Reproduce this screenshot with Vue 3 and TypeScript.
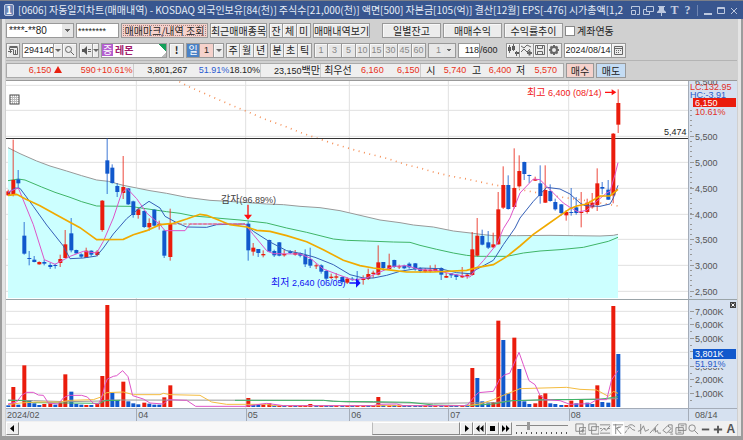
<script setup lang="ts">
import { ref } from 'vue'

type Candle = [string, number, number, number, number]

const account = ref('****-**80')
const code = ref('294140')
const pin = ref('********')
const count = ref('118')
const date = ref('2024/08/14')
const linked = ref(false)
const position = ref(22)

const titleParts = [
  '[0606]', '자동일지차트(매매내역)', '-', 'KOSDAQ', '외국인보유[84(천)]', '주식수[21,000(천)]',
  '액면[500]', '자본금[105(억)]', '결산[12월]', 'EPS[-476]', '시가총액[1,2',
]
const minutes = ['1', '3', '5', '10', '15', '30', '45', '60']

/* Both panes use units of a third of a pixel. */
const STEP = 15.64
const cx = (i: number) => Math.round((24 + STEP * i) / 3) * 3

/* colour, body top, body bottom, high, low */
const early: Candle[] = [
  ['r', 340, 352, 335, 354], ['r', 306, 351, 185, 355], ['b', 304, 316, 276, 330], ['b', 473, 527, 432, 530],
  ['b', 540, 543, 519, 562], ['b', 545, 552, 534, 553], ['r', 552, 559, 550, 560], ['b', 552, 557, 545, 562],
  ['b', 561, 567, 555, 573], ['b', 561, 564, 557, 572], ['r', 543, 555, 530, 567], ['r', 499, 540, 456, 540],
  ['b', 466, 517, 420, 523], ['b', 516, 526, 515, 528], ['b', 529, 536, 526, 540], ['r', 518, 540, 509, 540],
  ['b', 518, 530, 517, 535], ['r', 521, 531, 516, 535], ['r', 368, 456, 366, 461], ['b', 247, 287, 181, 348],
  ['b', 269, 315, 259, 317], ['b', 324, 342, 315, 357], ['r', 327, 345, 234, 363], ['b', 331, 379, 330, 381],
  ['b', 370, 411, 368, 419], ['r', 394, 411, 390, 422], ['b', 399, 447, 397, 450], ['r', 435, 448, 421, 458],
  ['b', 395, 443, 394, 445], ['r', 437, 443, 428, 455], ['b', 458, 533, 455, 540], ['r', 437, 537, 392, 548],
]
const late: Candle[] = [
  ['b', 437, 517, 430, 548], ['r', 509, 521, 495, 533], ['b', 513, 525, 513, 537], ['r', 528, 532, 517, 538],
  ['b', 486, 521, 485, 523], ['b', 519, 532, 515, 537], ['b', 493, 533, 492, 535], ['r', 528, 532, 516, 536],
  ['b', 520, 525, 516, 528], ['r', 524, 530, 516, 533], ['b', 525, 533, 523, 538], ['b', 531, 559, 514, 567],
  ['b', 543, 563, 509, 570], ['r', 562, 565, 556, 573], ['b', 562, 581, 559, 587], ['b', 579, 602, 575, 608],
  ['r', 596, 600, 587, 603], ['r', 595, 599, 585, 605], ['b', 597, 612, 595, 617], ['r', 602, 614, 598, 618],
  ['b', 602, 605, 597, 609], ['b', 604, 608, 579, 612], ['r', 603, 606, 592, 620], ['r', 588, 603, 572, 606],
  ['r', 584, 588, 578, 600], ['r', 553, 590, 502, 592], ['b', 552, 570, 552, 575], ['r', 562, 573, 527, 575],
  ['b', 546, 567, 545, 570], ['r', 565, 568, 560, 573], ['b', 563, 571, 560, 574], ['b', 557, 568, 553, 572],
  ['b', 556, 574, 555, 578], ['b', 571, 579, 568, 584], ['r', 575, 581, 570, 584], ['r', 575, 580, 562, 584],
  ['r', 573, 579, 560, 582], ['b', 570, 590, 568, 606], ['r', 594, 599, 585, 600], ['b', 586, 592, 586, 600],
  ['b', 590, 597, 588, 606], ['r', 594, 598, 567, 600], ['r', 590, 594, 587, 602], ['r', 514, 591, 462, 593],
  ['r', 473, 533, 420, 535], ['b', 474, 500, 455, 502], ['b', 493, 509, 459, 513], ['r', 499, 508, 464, 510],
  ['r', 394, 499, 342, 500], ['r', 321, 389, 265, 393], ['b', 321, 393, 292, 395], ['r', 330, 387, 211, 392],
  ['r', 279, 325, 232, 329], ['b', 252, 288, 251, 306], ['b', 291, 294, 290, 315], ['r', 303, 308, 296, 309],
  ['b', 316, 354, 262, 377], ['r', 336, 374, 262, 375], ['b', 339, 369, 319, 371], ['b', 372, 394, 362, 398],
  ['b', 379, 405, 378, 413], ['r', 402, 412, 396, 428], ['b', 402, 405, 330, 413], ['b', 388, 405, 357, 410],
  ['r', 402, 405, 342, 448], ['r', 374, 402, 362, 407], ['r', 374, 388, 345, 392], ['r', 316, 381, 271, 399],
  ['b', 327, 332, 312, 349], ['b', 335, 365, 306, 366], ['r', 167, 352, 165, 376], ['r', 75, 140, 34, 165],
]
const candles = [
  ...early.map((c, i) => ({ x: cx(i), c })),
  ...late.map((c, i) => ({ x: cx(i + 46), c })),
]

/* index, bar top, colour */
const volumeText =
  '0 322 b,1 267 r,2 320 b,3 202 r,4 306 b,5 316 b,6 321 b,7 318 r,8 316 r,9 320 b,10 314 r,11 229 r,12 281 b,13 318 b,14 320 b,15 321 r,16 321 b,17 318 r,18 234 r,19 21 r,20 284 b,21 307 b,22 251 r,23 310 b,24 316 b,25 319 b,26 314 r,27 317 b,28 320 b,29 320 b,30 298 r,31 262 r,' +
  '46 300 r,47 320 b,48 320 b,49 320 r,50 316 r,51 323 b,52 323 r,53 324 b,54 324 r,55 323 b,56 322 r,57 321 r,58 318 r,59 322 b,60 322 r,61 321 b,62 322 b,63 321 r,64 321 b,65 322 r,66 323 b,67 323 r,68 324 r,69 322 b,70 322 r,71 297 r,72 321 b,73 322 r,74 321 b,75 323 r,76 321 b,77 322 b,78 321 b,79 322 b,80 322 r,81 323 b,82 322 r,83 322 b,84 323 r,85 323 b,86 322 b,87 321 r,88 320 b,' +
  '89 210 r,90 240 b,91 310 b,92 316 b,93 312 r,94 68 r,95 126 b,96 286 b,97 119 r,98 213 b,99 310 b,100 318 b,101 316 r,102 292 r,103 286 r,104 316 b,105 318 b,106 321 b,107 321 r,108 308 r,109 316 b,110 306 r,111 314 b,112 318 b,113 262 r,114 312 b,115 314 b,116 24 r,117 168 b'
const volumes = volumeText.split(',').map((v) => {
  const [i, top, tone] = v.split(' ')
  return { x: cx(Number(i)), top: Number(top), tone }
})

const upper =
  '24,209 60,227 110,249 150,264 200,279 245,293 290,306 325,310 370,322 410,330 450,338 500,346 560,358 630,367 700,371 745,374 800,378 850,380 900,385 960,389 1020,398 1080,412 1140,426 1200,434 1240,441 1300,447 1360,459 1420,466 1450,470 1480,473 1550,473 1650,472 1720,473 1800,474 1840,472 1854,469'
const priceLines = {
  green: '24,308 55,303 75,306 125,327 165,343 210,358 245,371 290,384 390,385 430,391 500,401 540,406 580,414 630,418 660,421 720,426 800,435 860,450 920,463 960,473 1000,483 1040,487 1100,489 1180,492 1230,493 1260,502 1310,514 1360,525 1400,532 1430,535 1520,535 1570,525 1620,519 1680,515 1750,508 1800,496 1825,490 1854,478',
  navy: '24,345 45,330 60,331 100,385 140,441 190,504 210,542 250,540 290,534 310,510 340,468 380,422 420,389 447,370 480,390 495,415 530,434 560,447 620,448 650,440 735,438 760,460 810,492 860,518 910,528 945,538 1000,560 1050,590 1090,600 1120,600 1160,592 1200,580 1260,570 1320,572 1370,584 1410,587 1430,574 1480,547 1510,500 1545,450 1560,420 1600,370 1640,328 1680,333 1710,348 1740,375 1755,383 1800,385 1830,378 1840,360 1854,322',
  pink: '24,342 55,330 100,440 133,545 165,559 210,535 250,520 290,525 310,490 340,420 365,345 380,330 410,362 440,405 480,440 495,458 555,458 570,438 600,438 735,438 760,470 800,518 820,527 900,528 930,540 970,573 1020,592 1060,606 1100,600 1140,582 1180,565 1220,563 1260,575 1310,577 1350,587 1410,597 1430,570 1450,548 1490,499 1510,452 1530,420 1560,345 1600,303 1620,305 1660,345 1690,375 1710,388 1735,402 1760,397 1790,370 1820,345 1830,340 1845,290 1854,254',
  gold: '24,352 50,349 75,362 120,383 170,411 240,449 290,485 370,484 400,470 440,458 480,440 520,436 560,423 600,409 620,412 650,424 690,440 740,447 770,457 810,460 860,473 920,491 970,515 1030,547 1080,563 1120,570 1160,575 1220,582 1300,582 1400,577 1430,569 1480,560 1520,536 1560,504 1600,469 1640,441 1680,413 1710,392 1730,384 1760,378 1800,354 1830,354 1854,334',
  dots: '538,11 569,27 601,41 700,84 745,102 790,122 850,143 900,163 940,177 1000,197 1050,212 1100,226 1160,241 1225,262 1260,270 1300,282 1350,294 1400,303 1450,314 1490,322 1600,342 1680,357 1740,365 1855,384',
}
const volumeLines = {
  gray: '24,306 100,308 200,311 300,309 330,306 970,307 1040,312 1300,316 1480,314 1540,308 1854,302',
  green: '24,307 70,308 100,314 200,315 300,316 315,308 360,307',
  green2: '705,307 970,307 1000,310 1120,311 1230,313 1300,321 1400,323 1480,318 1535,308 1640,305 1800,304 1854,296',
  gold: '24,320 60,315 110,312 180,312 210,307 280,305 300,298 320,284 370,282 400,290 480,290 490,286 510,290 600,292 635,312 680,319 800,319 820,323 1400,323 1440,318 1480,305 1510,292 1560,272 1700,268 1740,274 1790,276 1825,295 1840,280 1854,286',
  pink: '24,318 50,312 65,292 80,283 100,283 115,291 130,292 145,315 175,318 190,300 205,292 245,292 262,297 280,316 295,318 305,300 315,260 322,243 340,235 350,233 368,218 384,236 398,293 430,303 450,315 490,318 505,305 560,307 587,325 735,325 800,316 850,323 1120,323 1135,319 1190,318 1210,323 1400,323 1420,300 1435,284 1480,280 1500,242 1515,230 1529,226 1557,163 1570,200 1587,248 1605,260 1620,292 1635,305 1680,308 1710,319 1770,317 1790,305 1820,305 1835,245 1854,218',
}
const months = [409, 737, 1048, 1345, 1706]
const priceGrid = [22, 97, 175, 253, 331, 409, 484, 562, 640]
const volumeGrid = [40, 79, 121, 163, 203, 244, 286]

const priceTicks = [
  { y: 55, t: '5,500' }, { y: 81, t: '5,000' }, { y: 107, t: '4,500' }, { y: 133, t: '4,000' },
  { y: 158, t: '3,500' }, { y: 184, t: '3,000' }, { y: 210, t: '2,500' },
]
const minorTicks = Array.from({ length: 37 }, (_, i) => 29 + i * 5.16).filter((y) => y < 216)
const volumeTicks = [
  { y: 11, t: '7,000K' }, { y: 24, t: '6,000K' }, { y: 38, t: '5,000K' }, { y: 51, t: '4,000K' },
  { y: 66, t: '3,000K' }, { y: 79, t: '2,000K' }, { y: 93, t: '1,000K' },
]
const notes = [
  { cls: 'note-red', x: 521, y: 11, ko: '최고', t: ' 6,400 (08/14)' },
  { cls: 'note-gray', x: 215, y: 118, ko: '감자', t: '(96.89%)' },
  { cls: 'note-blue', x: 265, y: 201, ko: '최저', t: ' 2,640 (06/05)' },
  { cls: 'note-black', x: 658, y: 51, ko: '', t: '5,474' },
]
const monthLabels = [
  { x: 0, t: '2024/02' }, { x: 391, t: '04' }, { x: 719, t: '05' },
  { x: 1030, t: '06' }, { x: 1327, t: '07' }, { x: 1688, t: '08' },
]
const place = (x: number, y: number) => ({ left: (x / 682) * 100 + '%', top: (y / 218) * 100 + '%' })

const tools = [
  'M2 1h8v8H2zM6 5h7v7H6zM9.500 6.500v4M7.500 8.500h4',
  'M2 1h8v7H2zM5 4h8v8H5z',
  'M1 2h11M1 6h2M5 6h2M9 6h3M1 11h11M2 9l3-3 3 2 4-5',
  'M1 2h11M4 1v11M4 6l4-2M10 4L5 6l5 6',
  'M1 4h3l2-2h3l3 2M4 7l2-3 3 3 3 1M3 8L1 11',
  'M4 1v11M1 9l3-1 3-5 2 6 4-2',
  'M1 11L10 1M5 9l2-4v5l2-2 1 3h3',
  'M1 8l5-5 4 3-5 5zM7 4V2h4v8H7M9 12h3',
  'M4 1h8v7H4zM1 5h8v7H1zM3 8h4M3 10h4M6 3h4',
]
</script>

<template>
  <div class="window">
    <header class="title">
      <span class="badge">1</span>
      <h1><span v-for="p in titleParts" :key="p">{{ p }}</span></h1>
      <nav class="winbtns">
        <button aria-label="Split"><svg width="11" height="11" viewBox="0 0 11 11"><path d="M1.500 4V1.500h8v8H7M1.500 5.500h4v4h-4z" /></svg></button>
        <button aria-label="Duplicate"><svg width="11" height="11" viewBox="0 0 11 11"><path d="M3.500 1.500h7v5h-7zM3.500 4.500h-3v5h6v-3" /></svg></button>
        <button aria-label="Pin"><svg width="11" height="11" viewBox="0 0 11 11"><path class="solid" d="M2 1h7v1H8v3l2 2v1H6v3H5V8H1V7l2-2V2H2z" /></svg></button>
        <button class="serif">T</button>
        <button class="serif">?</button>
        <i></i>
        <button aria-label="Minimize"><svg width="11" height="11" viewBox="0 0 11 11"><path class="thick" d="M2 9h8" /></svg></button>
        <button aria-label="Maximize"><svg width="11" height="11" viewBox="0 0 11 11"><path d="M2.500 2.500h7v6h-7zM2 3.500h8" /></svg></button>
        <button aria-label="Close"><svg width="11" height="11" viewBox="0 0 11 11"><path d="M3 3l6 6M9 3L3 9" /></svg></button>
      </nav>
    </header>

    <div class="body">
      <div class="row first">
        <select v-model="account" class="arrowed stars w68" aria-label="Account"><option>****-**80</option></select>
        <input v-model="pin" class="stars w43" aria-label="PIN" />
        <button class="btn rose dotted w87">매매마크/내역 조회</button>
        <button class="btn w57">최근매매종목</button>
        <div class="group"><button class="btn w14">잔</button><button class="btn w14">체</button><button class="btn w14">미</button></div>
        <button class="btn w57">매매내역보기</button>
        <button class="btn w59 apart">일별잔고</button>
        <button class="btn w59">매매수익</button>
        <button class="btn w59">수익률추이</button>
        <label class="check"><input v-model="linked" type="checkbox" />계좌연동</label>
      </div>

      <div class="row second">
        <button class="btn w14" aria-label="Panel"><svg width="11" height="11" viewBox="0 0 11 11"><path d="M1.500 2.500h8v7h-4v-5h-4zM1.500 1.500h8M7.500 5v5M0 6.500h4M2.500 5v3" /></svg></button>
        <div class="group">
          <input v-model="code" class="w32" aria-label="Code" />
          <button class="btn w9 drop" aria-label="Codes"></button>
          <button class="btn w14" aria-label="Search"><svg width="11" height="11" viewBox="0 0 11 11"><circle cx="4.500" cy="4.500" r="3" /><path d="M7 7l3 3" /></svg></button>
        </div>
        <div class="group">
          <button class="btn w14" aria-label="Sound"><svg width="11" height="11" viewBox="0 0 11 11"><path class="solid" d="M1 4h2l3-3v9L3 7H1z" /><path d="M7 4.500h3M7 6.500h3" /></svg></button>
          <button class="btn w6 drop" aria-label="Sound options"></button>
        </div>
        <div class="stock"><b>증</b><strong>레몬</strong></div>
        <button class="btn w15 bang">!</button>
        <div class="group period">
          <button class="btn w14 day">일</button><button class="btn w14 rose one">1</button><button class="btn w10 drop" aria-label="Periods"></button>
        </div>
        <div class="group"><button class="btn w14">주</button><button class="btn w14">월</button><button class="btn w14">년</button></div>
        <div class="group"><button class="btn w14">분</button><button class="btn w14">초</button><button class="btn w14">틱</button></div>
        <div class="group off"><button v-for="m in minutes" :key="m" class="btn w14" disabled>{{ m }}</button></div>
        <select class="arrowed faded w28" disabled aria-label="Unit"><option>1</option></select>
        <label class="count"><input v-model="count" class="w22" aria-label="Bars" />/600</label>
        <div class="group icons">
          <button class="btn w14" aria-label="Candles"><svg width="12" height="12" viewBox="0 0 12 12"><path class="solid" d="M1 3h3v4H1zM5 2h3v4H5zM8 8h4v2H8z" /><path d="M2.500 1v8M6.500 0v7M9.500 7v5" /></svg></button>
          <button class="btn w14" aria-label="Indicator"><svg width="12" height="12" viewBox="0 0 12 12"><path d="M1 2l3 2 3-3 4 2M1 8l3-3 3 3 3-3" /><path class="teeth" d="M7 9h5M9.500 6.500v5" /></svg></button>
          <button class="btn w14" aria-label="Save"><svg width="12" height="12" viewBox="0 0 12 12"><path d="M1.500 1.500h9v9h-9zM3.500 1v3.500h5V1M3.500 11V7.500h5V11" /></svg></button>
          <button class="btn w14" aria-label="Settings"><svg width="12" height="12" viewBox="0 0 12 12"><circle class="gear" cx="6" cy="6" r="3" /><path class="teeth" d="M6 1v2M6 9v2M1 6h2M9 6h2M2.500 2.500L4 4M8 8l1.500 1.500M9.500 2.500L8 4M4 8L2.500 9.500" /></svg></button>
        </div>
        <div class="group">
          <input v-model="date" class="w48" aria-label="Date" />
          <button class="btn w14" aria-label="Calendar"><svg width="11" height="11" viewBox="0 0 11 11"><path d="M1.500 1.500h8v8h-8zM1 3.500h9M3 5.500h1M5 5.500h1M7 5.500h1M3 7.500h1M5 7.500h1" /></svg></button>
        </div>
      </div>

      <div class="row quote">
        <div class="ticker">
          <span class="up">6,150 <em></em></span><span class="up">590</span><span class="up end">+10.61%</span><span>3,801,267</span><span class="down">51.91%</span><span class="end">18.10%</span><span class="end">23,150<small>백만</small></span><span><small>최우선</small></span><span class="up">6,160</span><span class="up end">6,150</span><span><small>시</small></span><span class="up">5,740</span><span><small>고</small></span><span class="up">6,400</span><span><small>저</small></span><span class="up">5,570</span>
        </div>
        <button class="btn rose w28">매수</button>
        <button class="btn sky w30">매도</button>
      </div>

      <main class="chart">
        <section class="plot price">
          <svg class="draw" viewBox="18 9 2046 654" preserveAspectRatio="none">
            <path v-for="y in priceGrid" :key="y" class="grid" :d="`M18 ${y}H2064`" />
            <path v-for="x in months" :key="x" class="grid" :d="`M${x} 9V663`" />
            <polygon class="cloud" :points="`${upper} 1854,660 24,660`" />
            <polyline class="ln gray" :points="upper" />
            <polyline class="ln green" :points="priceLines.green" />
            <polyline class="ln dots" :points="priceLines.dots" />
            <path class="level" d="M18 181.500H2064" />
            <g v-for="(k, i) in candles" :key="i" :class="k.c[0]">
              <rect class="wick" :x="k.x - 1" :y="k.c[3]" width="3" :height="k.c[4] - k.c[3]" />
              <rect :x="k.x - 5" :y="k.c[1]" width="12" :height="k.c[2] - k.c[1]" />
            </g>
            <polyline class="ln navy" :points="priceLines.navy" />
            <polyline class="ln pink" :points="priceLines.pink" />
            <polyline class="ln gold" :points="priceLines.gold" />
            <path class="flat" d="M520 438H735" />
            <path class="mark-red" d="M742 380h4v30h10l-12 15-12-15h10z" />
            <path class="mark-red" d="M1815 41h20v-7l14 9-14 9v-7h-20z" />
            <path class="mark-blue" d="M1048 613h20v-12l14 14-14 14v-12h-20z" />
          </svg>
          <svg class="handle" width="11" height="11" viewBox="0 0 11 11"><path d="M1 3.500h9M1 5.500h9M1 7.500h9M3.500 1v9M5.500 1v9M7.500 1v9" /><rect x="1" y="1" width="9" height="9" /></svg>
          <span v-for="n in notes" :key="n.t" class="note" :class="n.cls" :style="place(n.x, n.y)"><small v-if="n.ko">{{ n.ko }}</small>{{ n.t }}</span>
        </section>
        <section class="axis">
          <svg width="49" height="218" viewBox="0 0 49 218">
            <path v-for="y in minorTicks" :key="y" class="tick" :d="`M1 ${Math.round(y) + 0.5}h2`" />
            <text x="6" y="4">6,500</text>
            <g v-for="p in priceTicks" :key="p.t"><path class="tick" :d="`M1 ${p.y + 0.5}h4`" /><text x="6" :y="p.y + 4">{{ p.t }}</text></g>
            <text class="t-red" x="1" y="9">LC:132.95</text>
            <text class="t-blue" x="1" y="17">HC:-3.91</text>
            <rect class="f-red" x="4" y="17" width="43" height="9" />
            <text class="t-white" x="6" y="25">6,150</text>
            <text class="t-red" x="6" y="34">10.61%</text>
          </svg>
        </section>
        <section class="plot volume">
          <svg class="draw" viewBox="18 6 2046 324" preserveAspectRatio="none">
            <path v-for="y in volumeGrid" :key="y" class="grid" :d="`M18 ${y}H2064`" />
            <path v-for="x in months" :key="x" class="grid" :d="`M${x} 6V330`" />
            <rect v-for="v in volumes" :key="v.x" :class="v.tone" :x="v.x - 5" :y="v.top" width="12" :height="327 - v.top" />
            <polyline class="ln gray" :points="volumeLines.gray" />
            <polyline class="ln green" :points="volumeLines.green" />
            <polyline class="ln green" :points="volumeLines.green2" />
            <polyline class="ln thin-gold" :points="volumeLines.gold" />
            <polyline class="ln pink" :points="volumeLines.pink" />
          </svg>
        </section>
        <section class="axis">
          <svg width="49" height="108" viewBox="0 0 49 108">
            <g v-for="p in volumeTicks" :key="p.t"><path class="tick" :d="`M1 ${p.y + 0.5}h4M1 ${p.y + 7.5}h2`" /><text x="6" :y="p.y + 4">{{ p.t }}</text></g>
            <rect class="f-blue" x="4" y="49" width="43" height="10" />
            <rect class="axisbg" x="6" y="59" width="41" height="9" />
            <text class="t-white" x="6" y="57">3,801K</text>
            <text class="t-blue" x="6" y="67">51.91%</text>
            <path class="closer" d="M41 2h6v6h-6z" /><path class="closex" d="M42.500 3.500l3 3M45.500 3.500l-3 3" />
          </svg>
        </section>
        <footer class="dates">
          <span v-for="m in monthLabels" :key="m.t" :style="{ left: (m.x / 2046) * 100 + '%' }">{{ m.t }}</span>
        </footer>
        <footer class="today">08/14</footer>
      </main>

      <div class="bottom">
        <button class="nav" aria-label="Left"><svg width="9" height="9" viewBox="0 0 9 9"><path d="M6 1v7L2 4.500z" /></svg></button>
        <div class="track"><div class="thumb"></div></div>
        <button class="nav" aria-label="Right"><svg width="9" height="9" viewBox="0 0 9 9"><path d="M3 1v7l4-3.500z" /></svg></button>
        <button class="nav" aria-label="Rewind"><svg width="9" height="9" viewBox="0 0 9 9"><path d="M4.500 1v7L1 4.500zM8.500 1v7L5 4.500z" /></svg></button>
        <button class="nav" aria-label="Stop"><svg width="9" height="9" viewBox="0 0 9 9"><path d="M2 2h5v5H2z" /></svg></button>
        <button class="nav" aria-label="Forward"><svg width="9" height="9" viewBox="0 0 9 9"><path d="M1 1v7l3.500-3.500zM5 1v7l3.500-3.500z" /></svg></button>
        <input v-model="position" type="range" min="0" max="100" aria-label="Speed" />
        <div class="tools">
          <button v-for="(d, i) in tools" :key="i" :class="{ on: i === 3 }" :aria-label="'Tool ' + (i + 1)"><svg width="12" height="12" viewBox="0 0 13 13"><path :d="d" /></svg></button>
          <button aria-label="Zoom"><svg width="12" height="12" viewBox="0 0 13 13"><circle cx="5.500" cy="5.500" r="3.500" /><path d="M8 8l4 4" /></svg></button>
          <button aria-label="Less"><svg width="12" height="12" viewBox="0 0 13 13"><path class="bold" d="M2 7h8" /></svg></button>
          <button aria-label="More"><svg width="12" height="12" viewBox="0 0 13 13"><path class="bold" d="M2 7h9M6.500 3v8" /></svg></button>
          <button class="letter">A</button>
        </div>
      </div>
    </div>
  </div>
</template>

<style>
body { margin: 0; background: #a0a0a0; }
</style>

<style scoped>
* { box-sizing: border-box; }
.window { border: 0 solid #7b7f88; border-top-width: 1px; background: #9c9c9c; padding: 0 2px 4px; font: 10px/12px "Noto Sans CJK KR", sans-serif; color: #222; }
button, input, select { font: inherit; color: inherit; margin: 0; padding: 0; border-radius: 0; }
svg { display: block; flex: none; }
.title { display: flex; align-items: center; height: 18px; margin: 0 -2px; padding: 0 3px 0 4px; background: #38568f; color: #e6ecf6; }
.badge { width: 10px; height: 12px; border: 1px solid #c3cde2; background: #6d86b6; border-radius: 2px; text-align: center; line-height: 10px; font-weight: bold; color: #fff; }
h1 { flex: 1; min-width: 0; overflow: hidden; display: flex; gap: 2px; margin: 0 2px 0 4px; font-size: 10px; line-height: 16px; font-weight: normal; white-space: nowrap; }
h1 span { flex: none; }
.winbtns { display: flex; align-items: center; flex: none; }
.winbtns button { display: flex; justify-content: center; width: 13px; border: 0; background: none; color: #c3cde0; }
.winbtns i { width: 1px; height: 11px; margin: 0 3px; background: #6f86b2; }
.winbtns svg { fill: none; stroke: #bcc8df; }
.winbtns .solid { fill: #bcc8df; stroke: none; }
.winbtns .thick { stroke-width: 2; }
.winbtns .serif { font: bold 12px/12px "Liberation Serif", serif; }
.body { background: #d0d0d0; border: 0 solid #e4e4e4; border-width: 0 3px; padding: 0 1px; }
.row { display: flex; align-items: center; gap: 2px; }
.first { height: 22px; padding-top: 1px; }
.second { height: 18px; }
.btn { display: flex; align-items: center; justify-content: center; height: 15px; border: 1px solid #999; background: #ececec; white-space: nowrap; box-shadow: inset 1px 1px #f8f8f8; flex: none; }
.btn svg { fill: none; stroke: #666; }
.btn .solid { fill: #555; stroke: none; }
.gear, .btn .teeth { stroke-width: 2; }
.group { display: flex; flex: none; }
.group > * + * { border-left-width: 0; }
.row input:not([type=checkbox]), .row select { height: 15px; border: 1px solid #999; background-color: #fff; font: 9px/12px "Liberation Sans", sans-serif; padding: 0 0 0 1px; flex: none; }
.row .stars { font-size: 10px; padding-left: 2px; }
.row .arrowed { appearance: none; background-image: conic-gradient(from -45deg at 50% 100%, #666 90deg, transparent 0), linear-gradient(#e6e6e6, #e6e6e6); background-size: 6px 3px, 11px 100%; background-position: right 3px center, right; background-repeat: no-repeat; }
.row .faded { color: #888; background-color: #e8e8e8; padding-left: 7px; opacity: 1; }
.row .arrowed { background-image: conic-gradient(from 315deg at 50% 100%, #666 90deg, transparent 0), linear-gradient(#e6e6e6, #e6e6e6); }
.drop::after { content: ""; border: 3px solid transparent; border-top-color: #666; border-bottom: 0; }
.w6 { width: 6px; } .w9 { width: 9px; } .w10 { width: 10px; } .w14 { width: 14px; } .w15 { width: 15px; }
.w22 { width: 22px; } .w28 { width: 28px; } .w30 { width: 30px; } .w32 { width: 32px; } .w43 { width: 43px; }
.w48 { width: 48px; } .w57 { width: 57px; } .w59 { width: 59px; } .w68 { width: 68px; } .w87 { width: 87px; }
.rose { background: #f5d2cc; box-shadow: none; }
.sky { background: #c4dcf4; box-shadow: none; }
.dotted { outline: 1px dotted #a08080; outline-offset: -3px; }
.apart { margin-left: 10px; }
.check { display: flex; align-items: center; gap: 2px; white-space: nowrap; }
.check input { appearance: none; width: 10px; height: 10px; border: 1px solid #888; background: #fff; }
.stock { display: flex; align-items: center; gap: 2px; width: 66px; height: 15px; border: 1px solid #999; background: linear-gradient(225deg, #15a05a 5px, transparent 5px), linear-gradient(315deg, #bbb 3px, transparent 3px), #fff; }
.stock b { width: 11px; height: 12px; text-align: center; background: #b45fd0; color: #fff; font-weight: normal; }
.stock strong { color: #a0186a; font-size: 10px; }
.bang { font-weight: bold; }
.day { background: #4a82c6; color: #fff; box-shadow: none; }
.one, .off, .count, .ticker, .note, .dates, .today { font: 9px/12px "Liberation Sans", sans-serif; }
.off .btn { color: #888; background: #e6e6e6; }
.count { display: flex; align-items: center; margin-right: 6px; }
.row .count input { text-align: right; }
.quote { height: 20px; margin-top: 1px; border-top: 1px solid #b4b4b4; }
.ticker { flex: 0 1 558px; display: grid; grid-template-columns: 55fr 34fr 38fr 54fr 42fr 32fr 60fr 31fr 32fr 37fr 15fr 31fr 15fr 30fr 14fr 32fr 6fr; align-items: center; height: 15px; border: 1px solid #aaa; background: #efefef; }
.ticker span { text-align: right; white-space: nowrap; height: 13px; line-height: 13px; }
.ticker .end { border-right: 1px solid #ccc; }
small { font-family: "Noto Sans CJK KR", sans-serif; font-size: 10px; line-height: 12px; }
.ticker em { display: inline-block; border: 4px solid transparent; border-bottom: 7px solid #e82010; border-top: 0; }
.up { color: #e83020; }
.down { color: #2a5bd0; }
.chart { display: grid; grid-template-columns: 1fr 49px; grid-template-rows: 218px 109px 13px; border-top: 1px solid #9a9a9a; }
.plot { position: relative; background: #fff; min-width: 0; }
.draw { width: 100%; height: 100%; }
.volume, .volume + .axis { border-top: 1px solid #9aa4a8; }
.axis { background: #d6e1f0; border-left: 1px solid #a4acb8; min-width: 0; overflow: hidden; }
.axis text { font: 9px "Liberation Sans", sans-serif; fill: #555; }
.axis .tick { stroke: #999; fill: none; }
.axisbg { fill: #d6e1f0; }
.axis .t-red { fill: #e03028; } .axis .t-blue { fill: #2a5bc8; } .axis .t-white { fill: #fff; }
.f-red { fill: #ea1c0c; } .f-blue { fill: #1158cc; }
.closer { fill: #444; } .closex { stroke: #fff; }
.grid { stroke: #e0e0e0; stroke-width: 3; }
.cloud { fill: #ccffff; }
.ln { fill: none; stroke-width: 3; }
.gray { stroke: #999; } .green { stroke: #3fb568; } .navy { stroke: #3560b8; } .pink { stroke: #de54c8; }
.gold { stroke: #f0aa00; stroke-width: 5; } .thin-gold { stroke: #f4bc40; }
.dots { stroke: #f59058; stroke-width: 5; stroke-dasharray: 3 13.500; }
.level { stroke: #333; stroke-width: 3; }
.flat { stroke: #e07060; stroke-width: 3; stroke-dasharray: 10 5; }
.r { fill: #ea1c0c; } .b { fill: #1158cc; }
.wick { opacity: .8; }
.mark-red { fill: #ff1010; } .mark-blue { fill: #1010ff; }
.handle { position: absolute; left: 3px; top: 13px; }
.handle rect { fill: none; stroke: #444; } .handle path { stroke: #bbb; fill: none; }
.note { position: absolute; transform: translateY(-50%); white-space: pre; }
.note-red { color: #f02020; } .note-gray { color: #444; } .note-blue { color: #1010f0; } .note-black { color: #222; }
.dates, .today { background: #d6e1f0; border-top: 1px solid #a4acb8; color: #555; }
.dates { position: relative; }
.dates span { position: absolute; top: 0; padding-left: 1px; }
.dates span + span { border-left: 1px solid #a4acb8; }
.today { border-left: 1px solid #a4acb8; padding-left: 6px; }
.bottom { display: flex; align-items: center; height: 15px; background: #f0f0f0; }
.nav { display: flex; align-items: center; justify-content: center; width: 13px; height: 13px; flex: none; border: 1px solid #999; border-color: #fff #888 #888 #fff; background: #efefef; }
.nav svg { fill: #000; }
.track { flex: 1; min-width: 0; height: 13px; display: flex; justify-content: flex-end; background: #f8f8f8; }
.thumb { width: 20%; border: 1px solid #999; border-color: #fff #888 #888 #bbb; background: #ececec; }
.bottom input { appearance: none; width: 52px; height: 13px; margin: 0 6px 0 4px; background: linear-gradient(#888, #888) 0 3px/100% 1px no-repeat, repeating-linear-gradient(90deg, #555 0 1px, transparent 1px 5px) 0 10px/100% 2px no-repeat; }
.bottom input::-webkit-slider-thumb { appearance: none; width: 3px; height: 8px; margin-top: -5px; background: #999; }
.tools { display: flex; justify-content: space-between; flex: 0 0 163px; }
.tools button { display: flex; align-items: center; justify-content: center; width: 12px; height: 13px; border: 0; background: none; flex: none; }
.tools .on { background: #fff; }
.tools svg { fill: none; stroke: #858585; }
.tools .bold { stroke: #555; stroke-width: 2; }
.tools .letter { font: bold 12px/12px "Liberation Sans", sans-serif; color: #555; }
</style>
